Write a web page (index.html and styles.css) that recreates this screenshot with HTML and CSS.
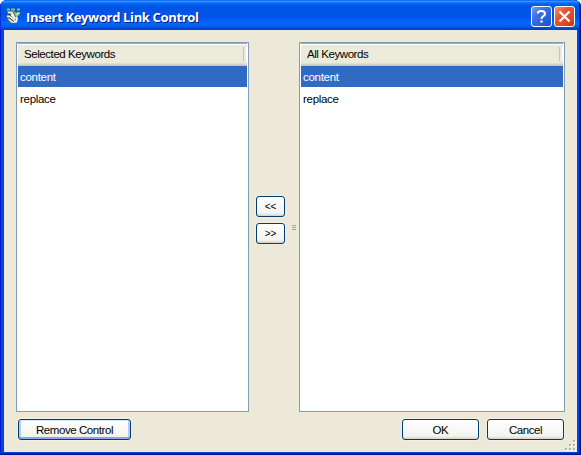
FILE: index.html
```html
<!DOCTYPE html>
<html lang="en">
<head>
<meta charset="utf-8">
<title>Insert Keyword Link Control</title>
<link rel="stylesheet" href="styles.css">
</head>
<body>
<div class="window">
  <header class="titlebar">
    <svg class="app-icon" width="16" height="16" viewBox="0 0 16 16">
      <path d="M1 1.5h3M5 1.5h4M11 1.5h3" stroke="#7fd84b" stroke-width="2"/>
      <path d="M1 3h8l3 5v4l-2 3H5l-3-3-1-3 1-2z" fill="#75857a"/>
      <path d="M2 4.5h4l3 4M1 8l3 1 5 4M3 11l3 3h4l1-3-3-6M5 6l4 5" fill="none" stroke="#f3f4e8" stroke-width="1.7"/>
      <path d="M2 6l3 1M3 9.5l5 4M7 4l3 5" fill="none" stroke="#33453b"/>
      <path d="M9 6l2-2h3v2l-3 3z" fill="#83cf62"/>
      <path d="M10 7l3-2" stroke="#dcecc9"/>
    </svg>
    <h1 class="title">Insert Keyword Link Control</h1>
    <div class="caption-buttons">
      <button class="caption help" aria-label="Help"><svg width="19" height="19" viewBox="0 0 19 19"><path d="M6 6.5V5.8Q6 4 9.5 4T13 6.8Q13 8.3 11 9.3Q9.5 10.1 9.5 12" fill="none" stroke="#fff" stroke-width="2"/><path d="M8.3 13.5h2.4v2H8.3z" fill="#fff"/></svg></button>
      <button class="caption close" aria-label="Close"><svg width="19" height="19" viewBox="0 0 19 19"><path d="M4.5 4.5l10 10M14.5 4.5l-10 10" stroke="#fff" stroke-width="2.2"/></svg></button>
    </div>
  </header>
  <main class="client">
    <div class="lists">
      <section class="list">
        <div class="list-head"><span>Selected Keywords</span></div>
        <div class="row selected"><span class="row-label">content</span></div>
        <div class="row"><span class="row-label">replace</span></div>
      </section>
      <div class="transfer">
        <div class="arrows">
          <button class="button arrow">&lt;&lt;</button>
          <button class="button arrow">&gt;&gt;</button>
        </div>
        <svg class="splitter" width="4" height="5" viewBox="0 0 4 5"><path d="M0 .5h4M0 2.5h4M0 4.5h4" stroke="#a5a5a0"/></svg>
      </div>
      <section class="list">
        <div class="list-head"><span>All Keywords</span></div>
        <div class="row selected"><span class="row-label">content</span></div>
        <div class="row"><span class="row-label">replace</span></div>
      </section>
    </div>
    <footer class="actions">
      <button class="button remove">Remove Control</button>
      <button class="button ok">OK</button>
      <button class="button cancel">Cancel</button>
    </footer>
    <svg class="size-grip" width="12" height="12" viewBox="0 0 12 12">
      <path d="M9 1h2v2H9zM5 5h2v2H5zM9 5h2v2H9zM1 9h2v2H1zM5 9h2v2H5zM9 9h2v2H9z" fill="#fff"/>
      <path d="M8 0h2v2H8zM4 4h2v2H4zM8 4h2v2H8zM0 8h2v2H0zM4 8h2v2H4zM8 8h2v2H8z" fill="#b8b4a2"/>
    </svg>
  </main>
</div>
</body>
</html>
```
FILE: styles.css
```css
* { box-sizing: border-box; }
body {
  margin: 0;
  background: #fff;
  font: 11.5px/14px "Liberation Sans", Arial, sans-serif;
  letter-spacing: -0.43px;
  color: #000;
}
button { font: inherit; letter-spacing: inherit; color: inherit; padding: 0; }
.window {
  width: 581px;
  height: 455px;
  padding: 0 4px 4px;
  display: flex;
  flex-direction: column;
  border-radius: 7px 7px 0 0;
  background: #0045e0;
  box-shadow: inset 1px 0 #0019cf, inset -1px 0 #00138c, inset -2px 0 #001ea0, inset 0 -1px #00138c, inset 0 -2px #001ea0;
  overflow: hidden;
}
.titlebar {
  height: 30px;
  flex: none;
  margin: 0 -4px;
  padding: 2px 6px 0 6px;
  display: flex;
  align-items: center;
  background: linear-gradient(#0058ee 0, #3593ff 4%, #288eff 6%, #127dff 8%, #036ffc 10%, #0262ee 14%, #0057e5 20%, #0054e3 24%, #0055eb 56%, #005bf5 66%, #026afe 76%, #0062ef 86%, #0052d6 92%, #0048d0 94%, #003fc0 100%);
  box-shadow: inset 1px 0 #0831d9, inset -2px 0 #001da0;
}
.app-icon { flex: none; }
.title {
  margin: 1px 0 0 4px;
  font: bold 13px/18px "Open Sans", "Noto Sans", sans-serif;
  letter-spacing: -0.35px;
  color: #fff;
  text-shadow: 1px 1px #0a1883;
  white-space: nowrap;
}
.caption-buttons { display: flex; gap: 2px; margin: 1px 0 0 auto; }
.caption {
  width: 21px;
  height: 21px;
  border: 1px solid #fff;
  border-radius: 3px;
}
.caption svg { display: block; }
.help { background: linear-gradient(135deg, #7297ef 0, #3f70e2 35%, #2860dc 70%, #1c50c8 100%); }
.close { background: linear-gradient(135deg, #ee9278 0, #e25a38 35%, #dc4a24 70%, #bd3510 100%); }
.client {
  position: relative;
  flex: 1;
  padding: 12px;
  background: #ece9d8;
}
.lists { display: grid; grid-template-columns: 233px 50px 266px; height: 370px; }
.list { border: 1px solid #7f9db9; background: #fff; padding: 0 1px; }
.list-head {
  height: 23px;
  display: flex;
  align-items: center;
  justify-content: space-between;
  margin-left: -1px;
  padding: 0 0 2px 6px;
  background: #ebeadb;
  border-top: 1px solid #aca899;
  border-left: 1px solid #fff;
  box-shadow: inset 0 1px #fff, inset 0 -1px #cbc7b8, inset 0 -2px #d6d2c2, inset 0 -3px #e2decd;
}
.list-head::after { content: ""; width: 2px; height: 14px; border-left: 1px solid #c7c5b2; border-right: 1px solid #fff; }
.row { height: 21px; margin-bottom: 1px; padding: 4px 0 0 2px; }
.row-label { letter-spacing: -0.3px; }
.selected { background: #316ac5; color: #fff; }
.transfer {
  display: flex;
  align-items: center;
  justify-content: space-between;
  padding: 0 3px 0 7px;
}
.arrows { display: flex; flex-direction: column; gap: 6px; margin-top: -14px; }
.button {
  height: 21px;
  border: 1px solid #003c74;
  border-radius: 3px;
  background: linear-gradient(#fff, #f3f3ef 85%, #d6d0c5);
  box-shadow: 0 0 0 1px #f3f0e3;
}
.arrow { width: 29px; font-size: 10px; letter-spacing: 0; }
.actions { display: flex; gap: 8px; margin: 7px 1px 0 2px; }
.remove {
  width: 113px;
  margin-right: auto;
  box-shadow: inset 0 1px #cee7ff, inset 0 -2px #8aa5ee, inset 2px 0 #b5cbf5, inset -2px 0 #b5cbf5, 0 0 0 1px #f3f0e3;
}
.ok, .cancel { width: 77px; }
.size-grip { position: absolute; right: 0; bottom: 0; }
```
